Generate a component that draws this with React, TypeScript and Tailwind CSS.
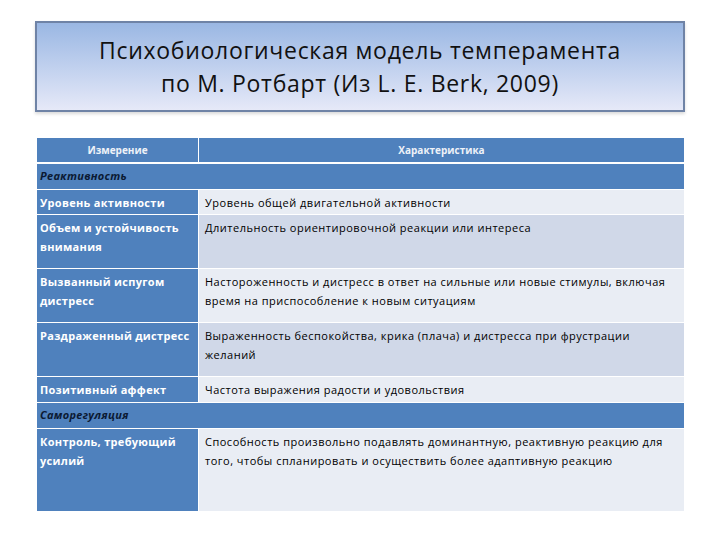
const font = { fontFamily: '"Open Sans", "Noto Sans", sans-serif' };

interface Row {
  name: string;
  text: string;
  h: string;
  shade: "light" | "dark";
}

const reactivity: Row[] = [
  { name: "Уровень активности", text: "Уровень общей двигательной активности", h: "h-[24px]", shade: "light" },
  { name: "Объем и устойчивость внимания", text: "Длительность ориентировочной реакции или интереса", h: "h-[53px]", shade: "dark" },
  {
    name: "Вызванный испугом дистресс",
    text: "Настороженность и дистресс в ответ на сильные или новые стимулы, включая время на приспособление к новым ситуациям",
    h: "h-[53px]",
    shade: "light",
  },
  {
    name: "Раздраженный дистресс",
    text: "Выраженность беспокойства, крика (плача) и дистресса при фрустрации желаний",
    h: "h-[53px]",
    shade: "dark",
  },
  { name: "Позитивный аффект", text: "Частота выражения радости и удовольствия", h: "h-[25px]", shade: "light" },
];

const selfReg: Row[] = [
  {
    name: "Контроль, требующий усилий",
    text: "Способность произвольно подавлять доминантную, реактивную реакцию для того, чтобы спланировать и осуществить более адаптивную реакцию",
    h: "h-[82px]",
    shade: "light",
  },
];

function DataRow({ row }: { row: Row }) {
  return (
    <div className={`flex gap-px ${row.h}`}>
      <div className="w-[161px] shrink-0 bg-[#4f81bd] px-[3px] pt-[3px] text-[11px] font-bold leading-[19px] tracking-[0.3px] text-white">
        {row.name}
      </div>
      <div
        className={`flex-1 pl-[6px] pr-2 pt-[3px] text-[11px] leading-[19px] tracking-[0.5px] text-black ${
          row.shade === "light" ? "bg-[#e9edf4]" : "bg-[#d0d8e8]"
        }`}
      >
        {row.text}
      </div>
    </div>
  );
}

function Category({ title }: { title: string }) {
  return (
    <div className="flex h-[25px] items-center bg-[#4f81bd] px-[3px] text-[11px] font-bold italic tracking-[0.3px] text-[#0b1a33]">
      {title}
    </div>
  );
}

export default function App() {
  return (
    <div className="h-[540px] w-[720px] bg-white pt-[21px]" style={font}>
      <div className="mx-[35px] flex h-[91px] flex-col items-center justify-center border-2 border-[#6f83a6] bg-gradient-to-b from-[#9ab7e3] to-[#e6e9f8] shadow-[0_2px_3px_rgba(0,0,0,0.15)]">
        <p className="text-center text-[23px] leading-[33px] tracking-[0.7px] text-[#111]">
          Психобиологическая модель темперамента
          <br />
          по М. Ротбарт (Из L. E. Berk, 2009)
        </p>
      </div>

      <div className="mx-[37px] mt-[26px] flex w-[647px] flex-col gap-px">
        <div className="mb-px flex h-[24px] gap-px">
          <div className="flex w-[161px] shrink-0 items-center justify-center bg-[#4f81bd] text-[10px] font-bold text-[#eef2f8]">
            Измерение
          </div>
          <div className="flex flex-1 items-center justify-center bg-[#4f81bd] text-[10px] font-bold text-[#eef2f8]">
            Характеристика
          </div>
        </div>
        <Category title="Реактивность" />
        {reactivity.map((r) => (
          <DataRow key={r.name} row={r} />
        ))}
        <Category title="Саморегуляция" />
        {selfReg.map((r) => (
          <DataRow key={r.name} row={r} />
        ))}
      </div>
    </div>
  );
}
